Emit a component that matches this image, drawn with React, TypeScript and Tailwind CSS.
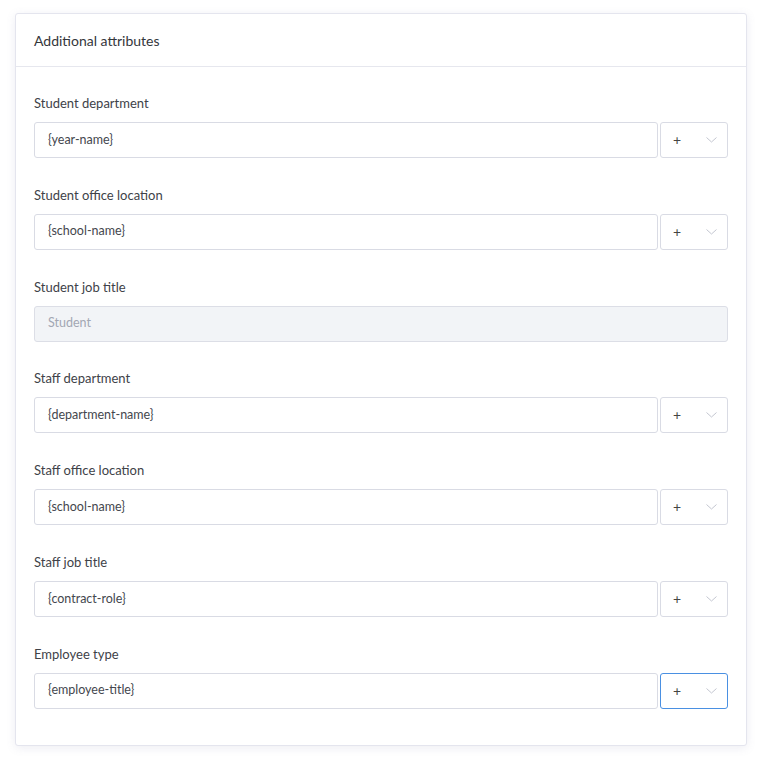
import React from "react";

type Field = {
  label: string;
  value: string;
  disabled?: boolean;
  focused?: boolean;
};

const fields: Field[] = [
  { label: "Student department", value: "{year-name}" },
  { label: "Student office location", value: "{school-name}" },
  { label: "Student job title", value: "Student", disabled: true },
  { label: "Staff department", value: "{department-name}" },
  { label: "Staff office location", value: "{school-name}" },
  { label: "Staff job title", value: "{contract-role}" },
  { label: "Employee type", value: "{employee-title}", focused: true },
];

function Chevron() {
  return (
    <svg width="11" height="6" viewBox="0 0 11 6" fill="none">
      <path d="M0.5 0.5L5.5 5L10.5 0.5" stroke="#c4c6d0" strokeWidth="1" />
    </svg>
  );
}

function AttributeRow({ field }: { field: Field }) {
  if (field.disabled) {
    return (
      <div className="flex h-9 items-center rounded-[3px] border border-[#dcdee6] bg-[#f2f4f7] px-[13px] text-[12.5px] text-[#a3a7b3]">
        {field.value}
      </div>
    );
  }

  return (
    <div className="flex gap-[2px]">
      <div className="flex h-9 flex-1 items-center rounded-[3px] border border-[#d9dbe4] bg-white px-[13px] text-[12.5px] text-[#44474e]">
        {field.value}
      </div>
      <button
        className={
          field.focused
            ? "flex h-9 w-[68px] items-center justify-between rounded-[3px] border border-[#4a90e2] bg-white pl-[12px] pr-[10px] text-[#444]"
            : "flex h-9 w-[68px] items-center justify-between rounded-[3px] border border-[#d9dbe4] bg-white pl-[12px] pr-[10px] text-[#444]"
        }
      >
        <span className="text-[14px] leading-none">+</span>
        <Chevron />
      </button>
    </div>
  );
}

export default function App() {
  return (
    <div
      className="min-h-screen bg-white pl-[15px] pr-[14px] pt-[13px]"
      style={{ fontFamily: "Lato, 'Open Sans', sans-serif" }}
    >
      <div className="rounded-[3px] border border-[#e4e5ee] bg-white shadow-[0_2px_10px_rgba(110,110,160,0.12)]">
        {/* Card header */}
        <div className="flex h-[53px] items-center border-b border-[#e6e7ee] px-[18px] text-[14px] text-[#34363b]">
          Additional attributes
        </div>

        {/* Fields */}
        <div className="flex flex-col gap-[26.8px] px-[18px] pb-[36px] pt-[26px]">
          {fields.map((f) => (
            <div key={f.label}>
              <div className="mb-[9px] h-5 text-[13px] leading-5 text-[#404248]">
                {f.label}
              </div>
              <AttributeRow field={f} />
            </div>
          ))}
        </div>
      </div>
    </div>
  );
}
